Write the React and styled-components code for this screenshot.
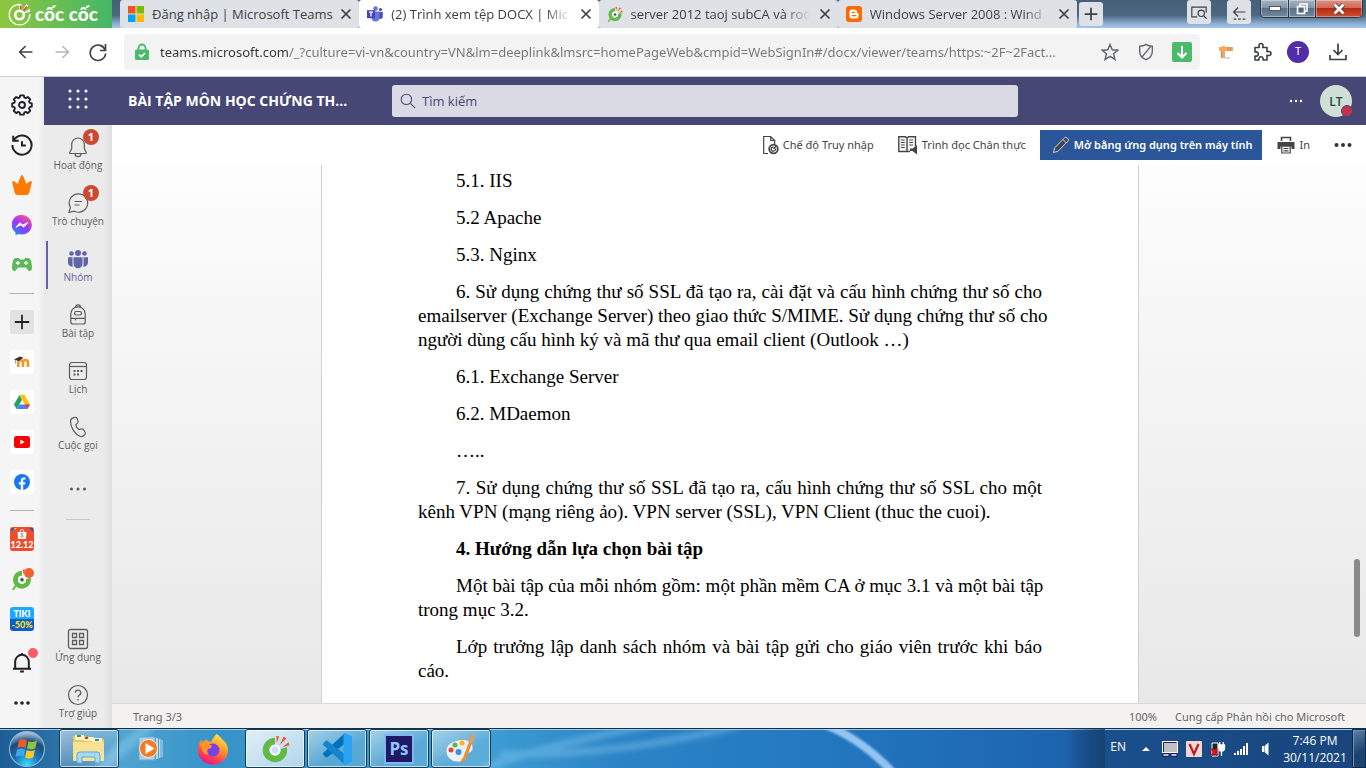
import React from "react";
import styled, { createGlobalStyle, css } from "styled-components";

const UI = `"Open Sans", "Noto Sans", sans-serif`;
const UI_WIDE = `"Noto Sans", "Open Sans", sans-serif`;

const GlobalStyle = createGlobalStyle`
  *, *::before, *::after { box-sizing: border-box; }
  html, body { margin: 0; padding: 0; overflow: hidden; }
  body { font-family: ${UI}; color: #252423; background: #fff; }
  button, input { font: inherit; color: inherit; border: 0; padding: 0; margin: 0; background: none; outline: 0; }
  svg { display: block; flex: none; }
  a { color: inherit; text-decoration: none; }
  p, h1, h2 { margin: 0; }
`;

const Screen = styled.div`
  display: flex;
  flex-direction: column;
  height: 100vh;
`;

/* ---------- Tab strip ---------- */
const TabStrip = styled.header`
  display: flex;
  flex: none;
  height: 28px;
  background: linear-gradient(180deg, #46607a 0%, #4d6781 55%, #8cb0d4 85%, #a5c8ec 100%);
`;
const Brand = styled.button`
  display: flex;
  align-items: center;
  gap: 4px;
  flex: none;
  width: 112px;
  margin-right: 8px;
  padding-left: 8px;
  background: linear-gradient(90deg, #8fc73e, #44b666);
  color: #fff;
  font: 900 19px / 28px Lato, ${UI};
  white-space: nowrap;
`;
const Tabs = styled.nav`
  display: flex;
  flex: 0 1 957px;
  min-width: 0;
`;
const Tab = styled.div`
  display: flex;
  align-items: center;
  gap: 8px;
  flex: 1 1 0;
  min-width: 0;
  padding: 0 6px 0 8px;
  border-radius: 3px;
  background: ${(p) => (p.$active ? "#fff" : "#dee1e6")};
`;
const TabTitle = styled.span`
  flex: 1;
  min-width: 0;
  margin-right: -4px;
  overflow: hidden;
  white-space: nowrap;
  font-size: 13px;
  line-height: 20px;
  color: #3c4043;
  mask-image: ${(p) => (p.$fade ? "linear-gradient(90deg, #000 84%, transparent 98%)" : "none")};
`;
const TabClose = styled.button`
  flex: none;
  width: 14px;
  height: 14px;
`;
const StripButton = styled.button`
  display: grid;
  place-items: center;
  flex: none;
  width: 24px;
  height: 24px;
  border-radius: 3px;
  background: #dee1e6;
  color: #3c4043;
  margin: ${(p) => p.$margin || "0"};
`;
const WindowControls = styled.div`
  display: flex;
  flex: none;
  height: 18px;
  margin: 0 3px 0 9px;
  border: 1px solid #26384a;
  border-top: 0;
  border-radius: 0 0 5px 5px;
  overflow: hidden;
`;
const WindowButton = styled.button`
  display: grid;
  place-items: center;
  width: ${(p) => p.$w}px;
  border-left: ${(p) => (p.$first ? "0" : "1px solid #26384a")};
  box-shadow: inset 0 0 0 1px rgba(255, 255, 255, 0.35);
  background: ${(p) =>
    p.$danger
      ? "linear-gradient(180deg, #d99384 0%, #cf6b55 45%, #b52a12 50%, #cc5132 100%)"
      : "linear-gradient(180deg, #a5b3c2 0%, #8495a8 45%, #5a7089 50%, #74899f 100%)"};
`;

/* ---------- Address bar ---------- */
const Toolbar = styled.div`
  display: flex;
  align-items: center;
  flex: none;
  height: 49px;
  padding: 0 10px 1px 8px;
  border-bottom: 1px solid #c9cdcb;
  background: #fff;
`;
const IconButton = styled.button`
  display: grid;
  place-items: center;
  flex: none;
  width: 36px;
  height: 36px;
  color: ${(p) => p.$color || "#3c4043"};
`;
const Omnibox = styled.div`
  display: flex;
  align-items: center;
  flex: 1;
  min-width: 0;
  height: 36px;
  margin: 0 8px;
  padding-left: 10px;
  border-radius: 4px;
  background: #f3f3f3;
`;
const UrlInput = styled.input`
  flex: 1;
  min-width: 0;
  height: 24px;
  margin-left: 10px;
  font: 13px ${UI_WIDE};
  text-overflow: ellipsis;
  color: transparent;
  background: linear-gradient(90deg, #333 128px, #757575 128px);
  background-clip: text;
`;
const Profile = styled.span`
  display: grid;
  place-items: center;
  width: 22px;
  height: 22px;
  border-radius: 50%;
  background: #512da8;
  color: #fff;
  font: 11px Roboto, sans-serif;
`;
const Spacer = styled.div`
  flex: ${(p) => (p.$w ? `0 0 ${p.$w}px` : "1")};
`;

/* ---------- Browser side bar ---------- */
const Main = styled.div`
  display: flex;
  flex: 1;
  min-height: 0;
`;
const SideBar = styled.nav`
  display: flex;
  flex-direction: column;
  align-items: center;
  flex: none;
  width: 44px;
  padding: 8px 0 5px;
  background: linear-gradient(90deg, #f5f5f5 38px, #ececec);
`;
const SideButton = styled.button`
  position: relative;
  display: grid;
  place-items: center;
  flex: none;
  width: 40px;
  height: 40px;
  color: #202124;
  margin-top: ${(p) => (p.$push ? "auto" : "0")};
`;
const SideRule = styled.hr`
  width: 24px;
  height: 1px;
  margin: 8px 0;
  border: 0;
  flex: none;
  background: #b4b4b4;
`;
const Tile = styled.span`
  display: grid;
  place-items: center;
  align-content: center;
  width: 24px;
  height: 24px;
  border-radius: 3px;
  overflow: hidden;
  background: ${(p) => p.$bg || "#fff"};
  color: ${(p) => p.$color || "#fff"};
  font: 900 ${(p) => p.$size || 9}px / 11px Lato, ${UI};
`;
const TileLine = styled.span`
  color: ${(p) => p.$color || "inherit"};
`;
const Dot = styled.span`
  position: absolute;
  top: ${(p) => p.$top || 5}px;
  right: ${(p) => p.$right || 4}px;
  width: 10px;
  height: 10px;
  border-radius: 50%;
  background: ${(p) => p.$color};
`;

/* ---------- Teams ---------- */
const Teams = styled.div`
  display: flex;
  flex-direction: column;
  flex: 1;
  min-width: 0;
`;
const TeamsBar = styled.div`
  display: flex;
  align-items: center;
  flex: none;
  height: 48px;
  padding-right: 14px;
  background: #464775;
  color: #fff;
`;
const Waffle = styled.button`
  display: grid;
  place-items: center;
  flex: none;
  width: 68px;
  height: 44px;
  margin-bottom: 4px;
`;
const TeamTitle = styled.h1`
  flex: none;
  width: 264px;
  margin-left: 16px;
  font-size: 14px;
  line-height: 20px;
  font-weight: 700;
  white-space: nowrap;
`;
const SearchBox = styled.label`
  display: flex;
  align-items: center;
  gap: 6px;
  flex: 0 1 626px;
  height: 32px;
  padding: 0 8px;
  border-radius: 3px;
  background: #dadae4;
  color: #464775;
`;
const SearchInput = styled.input`
  flex: 1;
  min-width: 0;
  font-size: 13px;
  &::placeholder { color: #464775; opacity: 1; }
`;
const Avatar = styled.button`
  position: relative;
  width: 32px;
  height: 32px;
  margin-left: 4px;
  border-radius: 50%;
  background: #cfe0d6;
  color: #1d4a34;
  font-size: 12px;
  font-weight: 600;
`;
const Presence = styled.span`
  position: absolute;
  right: -1px;
  bottom: 0;
  width: 12px;
  height: 12px;
  border-radius: 50%;
  border: 1px solid #464775;
  background: #c4314b;
`;
const TeamsBody = styled.div`
  display: flex;
  flex: 1;
  min-height: 0;
`;
const Rail = styled.nav`
  display: flex;
  flex-direction: column;
  gap: 8px;
  flex: none;
  width: 68px;
  padding: 4px 0 3px;
  background: linear-gradient(90deg, #ebebeb 60px, #dedede);
`;
const RailItem = styled.button`
  position: relative;
  display: flex;
  flex-direction: column;
  align-items: center;
  justify-content: ${(p) => (p.$iconOnly ? "center" : "flex-start")};
  flex: none;
  height: 48px;
  padding-top: ${(p) => (p.$iconOnly ? 0 : 6)}px;
  margin-top: ${(p) => (p.$push ? "auto" : "0")};
  color: ${(p) => (p.$active ? "#6264a7" : "#5c5c5c")};
  ${(p) =>
    p.$active &&
    css`
      box-shadow: inset 2px 0 0 #ebebeb, inset 4px 0 0 #6264a7;
    `}
`;
const RailLabel = styled.span`
  font-size: 10px;
  line-height: 12px;
  white-space: nowrap;
`;
const RailBadge = styled.span`
  position: absolute;
  top: 0;
  left: 39px;
  width: 16px;
  height: 16px;
  border-radius: 50%;
  background: #cc4a31;
  color: #fff;
  font-size: 11px;
  line-height: 16px;
  font-weight: 700;
  text-align: center;
`;
const RailRule = styled.hr`
  flex: none;
  width: 24px;
  height: 1px;
  margin: -2px auto 0;
  border: 0;
  background: #c8c8c8;
`;

const Viewer = styled.main`
  display: flex;
  flex-direction: column;
  flex: 1;
  min-width: 0;
`;
const CommandBar = styled.div`
  display: flex;
  align-items: center;
  justify-content: flex-end;
  flex: none;
  height: 40px;
  padding-right: 5px;
  background: #fff;
`;
const Command = styled.button`
  display: flex;
  align-items: center;
  gap: 4px;
  height: 30px;
  padding: 0 ${(p) => p.$padX || 12}px;
  font: 11px / 16px ${UI_WIDE};
  white-space: nowrap;
  color: #444;
  ${(p) =>
    p.$primary &&
    css`
      background: #2b579a;
      color: #fff;
      font-weight: 600;
      padding: 0 10px 0 12px;
      margin-left: 2px;
    `}
`;
const DocArea = styled.div`
  display: flex;
  flex: 1;
  min-height: 0;
  overflow: hidden;
  background: linear-gradient(180deg, #fdfdfd 0%, #f3f2f2 50%, #e9e8e8 100%);
`;
const PageWell = styled.div`
  flex: 1;
  min-width: 0;
  overflow: hidden;
`;
const Paper = styled.article`
  width: 818px;
  max-width: 100%;
  min-height: 100%;
  margin: 0 auto;
  padding: 4px 96px;
  border: 1px solid #cfcfd4;
  border-width: 0 1px;
  background: #fff;
  color: #000;
  font: 19px / 24px "Liberation Serif", serif;
`;
const Paragraph = styled.p`
  margin-bottom: 13px;
  font-weight: ${(p) => (p.$bold ? 700 : 400)};
`;
const Line = styled.span`
  display: block;
  text-indent: ${(p) => (p.$first ? "38px" : "0")};
  white-space: nowrap;
  text-align: left;
  text-align-last: ${(p) => (p.$justify ? "justify" : "left")};
`;
const ScrollTrack = styled.div`
  flex: none;
  width: 18px;
  padding: 394px 6px 0;
`;
const ScrollThumb = styled.div`
  height: 78px;
  border-radius: 3px;
  background: #8a8a8a;
`;
const StatusBar = styled.footer`
  display: flex;
  align-items: center;
  gap: 18px;
  flex: none;
  height: 25px;
  padding: 1px 21px 0;
  border-top: 1px solid #d8d8d8;
  background: #f3f2f1;
  color: #666;
  font: 11px / 16px ${UI_WIDE};
`;

/* ---------- Task bar ---------- */
const TaskBar = styled.footer`
  position: relative;
  display: flex;
  align-items: stretch;
  flex: none;
  height: 40px;
  border-top: 1px solid #12304c;
  box-shadow: inset 0 1px 0 #9fc9e8;
  overflow: hidden;
  background: linear-gradient(90deg, #1c5d96 0%, #2a71a6 4%, #4fa3d2 9%, #3793c8 16%, #3f9fd3 35%, #2c84c6 45%, #2276be 62%, #1d63ae 78%, #1a4f8c 81%, #19457c 100%);
`;
const Swoosh = styled.svg`
  position: absolute;
  inset: 0;
  width: 100%;
  height: 100%;
`;
const StartButton = styled.button`
  position: relative;
  display: grid;
  place-items: center;
  flex: none;
  width: 54px;
  margin-right: 5px;
`;
const TaskButton = styled.button`
  position: relative;
  display: grid;
  place-items: center;
  flex: none;
  width: 60px;
  margin-right: 2px;
  border-radius: 3px;
  ${(p) =>
    p.$open &&
    css`
      border: 1px solid #143a5a;
      box-shadow: inset 0 0 0 1px rgba(255, 255, 255, 0.65);
      background: linear-gradient(150deg, rgba(255, 255, 255, 0.55), rgba(255, 255, 255, 0.15) 60%);
    `}
  ${(p) =>
    p.$active &&
    css`
      background: linear-gradient(150deg, rgba(255, 255, 255, 0.85), rgba(255, 255, 255, 0.6));
    `}
`;
const PsTile = styled.span`
  display: grid;
  place-items: center;
  width: 30px;
  height: 30px;
  border: 2px solid #7fb8f0;
  background: #1f1a66;
  color: #8fc6ff;
  font: 700 17px / 20px "Open Sans", sans-serif;
`;
const Tray = styled.div`
  position: relative;
  display: flex;
  align-items: center;
  margin-left: auto;
  color: #fff;
  font-size: 12px;
`;
const TrayButton = styled.button`
  display: grid;
  place-items: center;
  width: 24px;
  height: 24px;
`;
const Lang = styled.button`
  height: 24px;
  margin: 0 8px 4px 0;
  font: 12px ${UI};
`;
const Clock = styled.button`
  width: 74px;
  font-size: 12px;
  line-height: 17px;
  text-align: center;
  white-space: nowrap;
`;
const ShowDesktop = styled.button`
  width: 14px;
  align-self: stretch;
  border: 1px solid #0d2a4a;
  box-shadow: inset 1px 1px 0 #6d90b4;
  background: linear-gradient(150deg, #5f83a8, #1c4471 60%);
`;

/* ---------- Drawings ---------- */
const CrossIcon = () => (
  <svg width="14" height="14" viewBox="0 0 14 14" stroke="#3c4043" strokeWidth="1.7">
    <path d="M2.5 2.5l9 9M11.5 2.5l-9 9" />
  </svg>
);
const CocCocLogo = () => (
  <svg width="23" height="26" viewBox="0 0 23 26" fill="none" stroke="#fff">
    <path d="M12 3.300A10.300 10.300 0 1 0 21.800 13" strokeWidth="1.300" />
    <circle cx="11.500" cy="14" r="4.300" strokeWidth="2.600" />
    <path d="M12 8.500L10.500 3.500l3 .3zM14.500 9.500l4-6 1.800 1.200zM16 12l5.500-4 .3 2.600z" fill="#fff" strokeWidth=".5" />
    <path d="M12.800 8.300l-.5-4M15.200 9.700l3.500-4.200" stroke="#f04d23" strokeWidth="1.500" />
  </svg>
);
const CocIcon = ({ size = 16, stem }) => (
  <svg width={size} height={size} viewBox="0 0 24 24">
    {stem && <path d="M7 17L2.500 23" stroke="#76c043" strokeWidth="2.500" strokeLinecap="round" />}
    <path d="M12 3a9.800 9.800 0 1 0 9.500 7.500l-5.200 1.400a4.400 4.400 0 1 1-4.300-3.500z" fill="#62b946" />
    <circle cx="12" cy="12.800" r="4.200" fill={stem ? "#ccebc2" : "none"} />
    <circle cx="12" cy="12.800" r="3.600" fill="none" stroke="#fff" strokeWidth="1.600" />
    {stem && <circle cx="12" cy="12.800" r="1.800" fill="#555" />}
    <path d="M13.500 7l-.5-5.500 2.300.2zM15.800 8.500l3.200-6.500 2.200 1.500zM17.800 10.500l5-4 .8 2.400z" fill="#ef5430" />
  </svg>
);
const MicrosoftIcon = () => (
  <svg width="16" height="16" viewBox="0 0 16 16">
    <path fill="#f25022" d="M0 0h7.500v7.500H0z" />
    <path fill="#7fba00" d="M8.500 0H16v7.500H8.500z" />
    <path fill="#00a4ef" d="M0 8.500h7.500V16H0z" />
    <path fill="#ffb900" d="M8.500 8.500H16V16H8.500z" />
  </svg>
);
const TeamsIcon = () => (
  <svg width="16" height="16" viewBox="0 0 16 16">
    <circle cx="8.500" cy="2.600" r="2.300" fill="#6c72d8" />
    <circle cx="13.500" cy="3.600" r="1.700" fill="#4a50b8" />
    <path d="M11.500 6h4.300v4.500a2.500 2.500 0 0 1-4.300 1.700z" fill="#4a50b8" />
    <path d="M4.500 5.500h8v6a4 4 0 0 1-8 0z" fill="#6c72d8" />
    <path d="M0 4.200h8v8H0z" fill="#3f46b5" />
    <path d="M2 6.200h4M4 6.200v4.400" stroke="#fff" strokeWidth="1.300" />
  </svg>
);
const BloggerIcon = () => (
  <svg width="16" height="16" viewBox="0 0 16 16">
    <rect width="16" height="16" rx="3" fill="#ff6a00" />
    <path d="M6 3.500h2.500A2.500 2.500 0 0 1 11 6c0 .8.300 1 .9 1.100.5.100.6.300.6.800V10a2.500 2.500 0 0 1-2.500 2.500H6A2.500 2.500 0 0 1 3.500 10V6A2.500 2.500 0 0 1 6 3.500z" fill="#fff" />
    <path d="M6.200 6.300h2.200M6.200 9.700h3.600" stroke="#ff6a00" strokeWidth="1.300" strokeLinecap="round" />
  </svg>
);
const LockIcon = () => (
  <svg width="16" height="18" viewBox="0 0 16 18">
    <path d="M4.500 8V5a3.500 3.500 0 0 1 7 0v3" fill="none" stroke="#4cba6b" strokeWidth="1.800" />
    <rect x="1" y="6.500" width="14" height="10.500" rx="1.500" fill="#4cba6b" />
    <path d="M5 11.500l2.200 2.300L11 10" fill="none" stroke="#fff" strokeWidth="1.700" />
  </svg>
);
const Stroke = ({ size = 20, w = 1.6, children, ...rest }) => (
  <svg width={size} height={size} viewBox="0 0 20 20" fill="none" stroke="currentColor" strokeWidth={w} {...rest}>
    {children}
  </svg>
);
const Dots = ({ r = 1.3, gap = 5, color = "currentColor" }) => (
  <svg width="20" height="20" viewBox="0 0 20 20" fill={color}>
    <circle cx={10 - gap} cy="10" r={r} />
    <circle cx="10" cy="10" r={r} />
    <circle cx={10 + gap} cy="10" r={r} />
  </svg>
);
const GearIcon = () => (
  <Stroke size={22} w={1.700} strokeLinejoin="round">
    <path d="M8.400 1.200h3.200l.5 2 1.300.6 1.900-1.100 2.200 2.200-1.100 1.900.6 1.300 1.900.4v3l-1.900.5-.6 1.300 1.100 1.900-2.200 2.200-1.900-1.100-1.300.6-.5 1.900H8.400l-.5-1.900-1.300-.6-1.900 1.100-2.200-2.200 1.100-1.900L3 12l-1.900-.5v-3L3 8.100l.6-1.300-1.100-1.900 2.200-2.200 1.900 1.100 1.300-.6z" />
    <circle cx="10" cy="10" r="2.700" />
  </Stroke>
);
const HistoryIcon = () => (
  <Stroke size={22} w={1.800}>
    <path d="M2.600 5.500A8.700 8.700 0 1 1 1.300 10" />
    <path d="M2 1.500v4.700h5M10 6.500v4h3.500" />
  </Stroke>
);
const CrownIcon = () => (
  <svg width="20" height="20" viewBox="0 0 20 20" fill="#ff7a00">
    <path d="M0 6.500c1.800-.8 3.400 0 5.500 2.500L9 .8c.4-1 1.600-1 2 0L14.500 9c2.100-2.500 3.700-3.300 5.500-2.500L17.500 17q-.5 3-3 3h-9q-2.500 0-3-3z" />
  </svg>
);
const MessengerIcon = () => (
  <svg width="20" height="20" viewBox="0 0 20 20">
    <defs>
      <linearGradient id="msg" x1="0.200" y1="1" x2="0.800" y2="0">
        <stop offset="0" stopColor="#1a8cff" />
        <stop offset="0.500" stopColor="#a033ff" />
        <stop offset="1" stopColor="#ff5f7a" />
      </linearGradient>
    </defs>
    <path d="M10 0a10 9.700 0 1 1-3 19L3.500 20v-2.800A9.600 9.600 0 0 1 10 0z" fill="url(#msg)" />
    <path d="M4 12.300l3.800-4.600 3 2.300 5-2.500-4 4.700-3-2.300z" fill="#fff" stroke="#fff" strokeWidth=".8" />
  </svg>
);
const GamepadIcon = () => (
  <svg width="22" height="16" viewBox="0 0 22 16">
    <path d="M5 1h3l1 1.500h4L14 1h3c3 0 3.700 5 4 9 .2 4-2.500 5.500-4.500 2.500L15 10.500H7L5.500 12.500C3.500 15.500.8 14 1 10c.300-4 1-9 4-9z" fill="#5cb85c" />
    <path d="M6.800 4v4M4.800 6h4" stroke="#fff" strokeWidth="1.300" />
    <path d="M15 4v4M13 6h4" stroke="#fff" strokeWidth="1.400" strokeDasharray="1.400 1.200" />
  </svg>
);
const PlusIcon = ({ size = 16 }) => (
  <Stroke size={size} w={2.200}>
    <path d="M10 1v18M1 10h18" />
  </Stroke>
);
const MoodleIcon = () => (
  <svg width="16" height="12" viewBox="0 0 16 12" fill="none">
    <path d="M4.300 11V6.500a2.200 2.200 0 0 1 4.700 0V11M9 11V6.500a2.400 2.400 0 0 1 5 0V11" stroke="#f7931e" strokeWidth="2.500" />
    <path d="M0 3.500L6 .5l3.500 1.200L4.500 5z" fill="#333" />
    <path d="M1.500 4v3.500" stroke="#777" strokeWidth=".7" />
  </svg>
);
const DriveIcon = () => (
  <svg width="16" height="14" viewBox="0 0 16 14">
    <path d="M5.400 0L0 9.400 2.600 14 8 4.700z" fill="#1ea362" />
    <path d="M5.400 0h5.200L16 9.400h-5.300z" fill="#ffc107" />
    <path d="M5.300 9.400H16L13.400 14H2.600z" fill="#4285f4" />
    <path d="M10.700 9.400H16L13.400 14z" fill="#ea4335" />
  </svg>
);
const YoutubeIcon = () => (
  <svg width="16" height="12" viewBox="0 0 16 12">
    <rect width="16" height="12" rx="2.500" fill="#f00" />
    <path d="M6.300 3.400v5.200L10.700 6z" fill="#fff" />
  </svg>
);
const FacebookIcon = () => (
  <svg width="16" height="16" viewBox="0 0 16 16">
    <circle cx="8" cy="8" r="8" fill="#1877f2" />
    <path d="M6.800 16v-5.500h-2V8.200h2V6.500c0-2 1.200-3.100 3-3.100.9 0 1.700.1 1.700.1v2h-1c-1 0-1.300.6-1.300 1.200v1.500h2.200l-.4 2.300H9.200V16z" fill="#fff" />
  </svg>
);
const BagIcon = () => (
  <svg width="22" height="11" viewBox="0 0 22 11">
    <path d="M0 0h5L1 3zM18 0h4v4z" fill="#1f5fc4" />
    <path d="M3 0h3L3.500 2z" fill="#f8c42c" />
    <path d="M6.500 4h9l-.5 7H7z" fill="#fff" />
    <path d="M9 4a2 2.500 0 0 1 4 0" fill="none" stroke="#fff" />
    <path d="M12.300 5.700c-2.500-.9-3.200.9-1.300 1.500s1.500 2.300-1.400 1.500" fill="none" stroke="#ee4d2d" strokeWidth=".9" />
  </svg>
);
const BellIcon = ({ size = 22, w = 1.8 }) => (
  <Stroke size={size} w={w}>
    <path d="M1.800 15.300h16.400M3.800 15V8.800a6.200 6.200 0 0 1 12.400 0V15M8.300 17.800h3.400M10 1v2" />
  </Stroke>
);
const RailIcon = ({ children, fill }) => (
  <svg width="24" height="24" viewBox="0 0 24 24" fill={fill || "none"} stroke={fill ? "none" : "currentColor"} strokeWidth="1.200">
    {children}
  </svg>
);

const railItems = [
  {
    label: "Hoạt động",
    badge: 1,
    icon: (
      <RailIcon>
        <path d="M12 3a6.300 6.300 0 0 0-6.300 6.300v4.200L3.800 17.500c-.3.700 0 1 .7 1h15c.7 0 1-.300.7-1l-1.900-4V9.300A6.300 6.300 0 0 0 12 3zM9 18.700a3 3 0 0 0 6 0" />
      </RailIcon>
    ),
  },
  {
    label: "Trò chuyện",
    badge: 1,
    icon: (
      <RailIcon>
        <path d="M12.500 2.800a9.200 9.200 0 1 1-4.200 17.400L3 21.500l1.400-5A9.200 9.200 0 0 1 12.500 2.800zM8.500 10.500h7.500M8.500 14h5" />
      </RailIcon>
    ),
  },
  {
    label: "Nhóm",
    active: true,
    icon: (
      <RailIcon fill="#6264a7">
        <circle cx="12" cy="6" r="3" />
        <circle cx="5.500" cy="6.500" r="2.300" />
        <circle cx="18.500" cy="6.500" r="2.300" />
        <path d="M7.500 10.300h9v6.500a4.500 4.500 0 0 1-9 0zM2 10.300h4.500v7.500q0 1 .4 2C4 19.800 2 18 2 15.500zM22 10.300h-4.500v7.500q0 1-.4 2c2.900 0 4.900-1.800 4.900-4.300z" />
      </RailIcon>
    ),
  },
  {
    label: "Bài tập",
    icon: (
      <RailIcon>
        <path d="M4.800 11a7.200 7.200 0 0 1 14.400 0v8q0 2-2 2H6.800q-2 0-2-2zM9.500 4.300a2.500 2.500 0 0 1 5 0M4.800 15.300h14.400M9.500 15.300v2" />
        <rect x="8.500" y="8.500" width="7" height="3.500" rx="1.700" />
      </RailIcon>
    ),
  },
  {
    label: "Lịch",
    icon: (
      <RailIcon>
        <rect x="3.500" y="3.500" width="17" height="17" rx="2.500" />
        <path d="M3.500 7.500h17" />
        <path d="M7.500 12h2M11 12h2M14.500 12h2M7.500 15.500h2M11 15.500h2" strokeWidth="2" />
      </RailIcon>
    ),
  },
  {
    label: "Cuộc gọi",
    icon: (
      <RailIcon>
        <path d="M7.200 2.800L9 2.300c1-.200 1.700.2 2 1l1 2.600c.3.900.1 1.600-.5 2.200L9.700 9.700c.3 1.700 1.700 4 3.400 5l2.300-.7c.8-.2 1.500 0 2 .7l1.600 2.300c.6.8.5 1.600-.1 2.300l-1.200 1.200c-1 1-2.400 1.300-3.700.8C8.700 19.200 4.800 12.500 4.500 6.500c0-1.900 1.200-3.300 2.700-3.700z" />
      </RailIcon>
    ),
  },
];

const tabs = [
  { title: "Đăng nhập | Microsoft Teams", icon: <MicrosoftIcon /> },
  { title: "(2) Trình xem tệp DOCX | Mic", icon: <TeamsIcon />, active: true, fade: true },
  { title: "server 2012 taoj subCA và roo", icon: <CocIcon stem />, fade: true },
  { title: "Windows Server 2008 : Wind", icon: <BloggerIcon />, fade: true },
];

const documentText = [
  { lines: ["5.1. IIS"] },
  { lines: ["5.2 Apache"] },
  { lines: ["5.3. Nginx"] },
  {
    lines: [
      "6. Sử dụng chứng thư số SSL đã tạo ra, cài đặt và cấu hình chứng thư số cho",
      "emailserver (Exchange Server) theo giao thức S/MIME. Sử dụng chứng thư số cho",
      "người dùng cấu hình ký và mã thư qua email client (Outlook …)",
    ],
  },
  { lines: ["6.1. Exchange Server"] },
  { lines: ["6.2. MDaemon"] },
  { lines: ["….."] },
  {
    lines: [
      "7. Sử dụng chứng thư số SSL đã tạo ra, cấu hình chứng thư số SSL cho một",
      "kênh VPN (mạng riêng ảo). VPN server (SSL), VPN Client (thuc the cuoi).",
    ],
  },
  { bold: true, lines: ["4. Hướng dẫn lựa chọn bài tập"] },
  {
    lines: [
      "Một bài tập của mỗi nhóm gồm: một phần mềm CA ở mục 3.1 và một bài tập",
      "trong mục 3.2.",
    ],
  },
  {
    lines: [
      "Lớp trưởng lập danh sách nhóm và bài tập gửi cho giáo viên trước khi báo",
      "cáo.",
    ],
  },
];

function BrowserTop() {
  return (
    <>
      <TabStrip>
        <Brand><CocCocLogo />cốc cốc</Brand>
        <Tabs>
          {tabs.map((t) => (
            <Tab key={t.title} $active={t.active}>
              {t.icon}
              <TabTitle $fade={t.fade}>{t.title}</TabTitle>
              <TabClose aria-label="Đóng"><CrossIcon /></TabClose>
            </Tab>
          ))}
        </Tabs>
        <StripButton $margin="2px 0 0 2px" aria-label="Thẻ mới">
          <Stroke size={14} w={2.500}><path d="M10 1v18M1 10h18" /></Stroke>
        </StripButton>
        <Spacer />
        <StripButton aria-label="Tìm thẻ">
          <Stroke size={18} w={1.300}>
            <path d="M8 15.500H2V4.500h16v6" />
            <circle cx="12.500" cy="11.500" r="3.500" />
            <path d="M15 14l3.500 3.500" />
          </Stroke>
        </StripButton>
        <StripButton $margin="0 0 0 16px" aria-label="Khôi phục">
          <Stroke size={18} w={1.300}>
            <path d="M17 10H4M9 5l-5 5 5 5" />
            <path d="M4 18h14" strokeDasharray="3 2" />
          </Stroke>
        </StripButton>
        <WindowControls>
          <WindowButton $w={27} $first aria-label="Thu nhỏ">
            <svg width="12" height="5"><rect x=".5" y=".5" width="11" height="4" fill="#fff" stroke="#4a5a6c" /></svg>
          </WindowButton>
          <WindowButton $w={27} aria-label="Khôi phục cửa sổ">
            <svg width="12" height="12" fill="none" stroke="#fff" strokeWidth="1.600">
              <path d="M4 3V1h7v7H9" />
              <rect x="1.500" y="3.500" width="7" height="7" />
              <rect x="4" y="6" width="2" height="2" stroke="#4a5a6c" strokeWidth="1" />
            </svg>
          </WindowButton>
          <WindowButton $w={47} $danger aria-label="Đóng cửa sổ">
            <svg width="14" height="12" viewBox="0 0 14 12">
              <path d="M2.500 1.500l9 9M11.500 1.500l-9 9" stroke="#5b3a3a" strokeWidth="4.400" />
              <path d="M2.500 1.500l9 9M11.500 1.500l-9 9" stroke="#fff" strokeWidth="2.800" />
            </svg>
          </WindowButton>
        </WindowControls>
      </TabStrip>
      <Toolbar>
        <IconButton aria-label="Quay lại">
          <Stroke size={16} w={1.900}><path d="M18 10H2.500M9.500 2.500L2 10l7.500 7.500" /></Stroke>
        </IconButton>
        <IconButton $color="#b5b5b5" aria-label="Tiến">
          <Stroke size={16} w={1.900}><path d="M2 10h15.500M10.500 2.500L18 10l-7.500 7.500" /></Stroke>
        </IconButton>
        <IconButton aria-label="Tải lại">
          <Stroke size={20} w={1.700}>
            <path d="M17.300 8.500A7.700 7.700 0 1 0 17.600 11.500" />
            <path d="M17.500 2v6.500H12" />
          </Stroke>
        </IconButton>
        <Omnibox>
          <LockIcon />
          <UrlInput
            aria-label="Địa chỉ"
            defaultValue="teams.microsoft.com/_?culture=vi-vn&country=VN&lm=deeplink&lmsrc=homePageWeb&cmpid=WebSignIn#/docx/viewer/teams/https:~2F~2Fact..."
          />
          <IconButton $color="#5f6368" aria-label="Đánh dấu">
            <Stroke size={18} w={1.600}><path d="M10 1.800l2.500 5.700 6.200.5-4.700 4 1.500 6.200-5.500-3.300-5.500 3.300L6 12 1.300 8l6.200-.5z" /></Stroke>
          </IconButton>
          <IconButton $color="#5f6368" aria-label="Chặn quảng cáo">
            <Stroke size={18} w={1.500}><path d="M10 1.500c2 1.500 4.500 2 7 2v6c0 4.500-3 7.500-7 9-4-1.500-7-4.500-7-9v-6c2.500 0 5-.5 7-2zM5.500 15.500l10-12" /></Stroke>
          </IconButton>
          <IconButton aria-label="Tải xuống video">
            <svg width="20" height="20" viewBox="0 0 20 20">
              <rect width="20" height="20" rx="2" fill="#4cba6b" />
              <path d="M10 4v11.500M5.500 11l4.500 4.500 4.500-4.500" fill="none" stroke="#fff" strokeWidth="2" />
            </svg>
          </IconButton>
        </Omnibox>
        <IconButton aria-label="Tiện ích đã ghim">
          <svg width="16" height="16" viewBox="0 0 16 16">
            <path d="M1 3h3V2h3v1h8v4H7v7H3V7H1z" fill="#f0a862" />
            <path d="M3.500 7v7M10 3v4M12.500 3v4" stroke="#c77a35" strokeWidth=".8" />
            <path d="M7 14h5" stroke="#ccc" strokeWidth="1.500" />
          </svg>
        </IconButton>
        <IconButton aria-label="Tiện ích">
          <Stroke size={20} w={1.600} strokeLinejoin="round">
            <path d="M3 5.500h4.300c-1-2.700.200-4 1.700-4s2.700 1.300 1.700 4H15v4.300c2.700-1 4 .2 4 1.700s-1.300 2.700-4 1.700V18h-4c.5-2-.5-3.300-2-3.300S6.500 16 7 18H3v-4c2 .5 3.300-.5 3.300-2S5 9.500 3 10z" />
          </Stroke>
        </IconButton>
        <IconButton aria-label="Hồ sơ"><Profile>T</Profile></IconButton>
        <Spacer $w={4} />
        <IconButton aria-label="Tải xuống">
          <Stroke size={20} w={1.700}><path d="M10 1.500V12M5.500 8l4.500 4.500L14.500 8M2 13v4.500h16V13" /></Stroke>
        </IconButton>
      </Toolbar>
    </>
  );
}

function BrowserSide() {
  return (
    <SideBar aria-label="Thanh bên">
      <SideButton aria-label="Cài đặt"><GearIcon /></SideButton>
      <SideButton aria-label="Lịch sử"><HistoryIcon /></SideButton>
      <SideButton aria-label="Phần thưởng"><CrownIcon /></SideButton>
      <SideButton aria-label="Messenger"><MessengerIcon /></SideButton>
      <SideButton aria-label="Trò chơi"><GamepadIcon /></SideButton>
      <SideRule />
      <SideButton aria-label="Thêm"><Tile $bg="#e2e2e2" $color="#202124"><PlusIcon /></Tile></SideButton>
      <SideButton aria-label="Moodle"><Tile><MoodleIcon /></Tile></SideButton>
      <SideButton aria-label="Drive"><Tile><DriveIcon /></Tile></SideButton>
      <SideButton aria-label="YouTube"><Tile><YoutubeIcon /></Tile></SideButton>
      <SideButton aria-label="Facebook"><Tile><FacebookIcon /></Tile></SideButton>
      <SideRule />
      <SideButton><Tile $bg="#ee4d2d"><BagIcon /><TileLine>12.12</TileLine></Tile></SideButton>
      <SideButton aria-label="Cốc Cốc"><CocIcon size={22} stem /><Dot $color="#f26236" $top={9} $right={8} /></SideButton>
      <SideButton>
        <Tile $bg="linear-gradient(#1ba8ff 50%, #0d5cd6 50%)"><TileLine>TIKI</TileLine><TileLine $color="#ffe600">-50%</TileLine></Tile>
      </SideButton>
      <SideButton $push aria-label="Thông báo"><BellIcon /><Dot $color="#ff5a65" $right={4} /></SideButton>
      <SideButton aria-label="Thêm nữa"><Dots r={1.800} gap={6} /></SideButton>
    </SideBar>
  );
}

function Document() {
  return (
    <DocArea>
      <PageWell>
        <Paper>
          {documentText.map((p) => (
            <Paragraph key={p.lines[0]} $bold={p.bold}>
              {p.lines.map((line, i) => (
                <Line key={line} $first={i === 0} $justify={i < p.lines.length - 1}>{line}</Line>
              ))}
            </Paragraph>
          ))}
        </Paper>
      </PageWell>
      <ScrollTrack><ScrollThumb /></ScrollTrack>
    </DocArea>
  );
}

function TeamsApp() {
  return (
    <Teams>
      <TeamsBar>
        <Waffle aria-label="Ứng dụng Microsoft">
          <svg width="20" height="20" viewBox="0 0 20 20" fill="#fff">
            {[2, 10, 18].map((y) => [2, 10, 18].map((x) => <circle key={`${x}-${y}`} cx={x} cy={y} r="1.500" />))}
          </svg>
        </Waffle>
        <TeamTitle>BÀI TẬP MÔN HỌC CHỨNG TH...</TeamTitle>
        <SearchBox>
          <Stroke size={16} w={1.300}><circle cx="8" cy="8" r="6.500" /><path d="M13 13l6 6" /></Stroke>
          <SearchInput type="search" placeholder="Tìm kiếm" aria-label="Tìm kiếm" />
        </SearchBox>
        <Spacer />
        <IconButton $color="#fff" aria-label="Tùy chọn"><Dots r={1.200} /></IconButton>
        <Spacer $w={2} />
        <Avatar>LT<Presence /></Avatar>
      </TeamsBar>
      <TeamsBody>
        <Rail aria-label="Teams">
          {railItems.map((item) => (
            <RailItem key={item.label} $active={item.active}>
              {item.icon}
              <RailLabel>{item.label}</RailLabel>
              {item.badge && <RailBadge>{item.badge}</RailBadge>}
            </RailItem>
          ))}
          <RailItem $iconOnly aria-label="Thêm ứng dụng"><Dots r={1.500} gap={6.500} /></RailItem>
          <RailRule />
          <RailItem $push>
            <RailIcon>
              <rect x="2.500" y="2.500" width="19" height="19" rx="2" strokeWidth="1.300" />
              <path d="M6.500 6.500h4v4h-4zM13.500 6.500h4v4h-4zM6.500 13.500h4v4h-4zM13.500 13.500h4v4h-4z" strokeWidth="1.300" />
            </RailIcon>
            <RailLabel>Ứng dụng</RailLabel>
          </RailItem>
          <RailItem>
            <RailIcon>
              <circle cx="12" cy="12" r="9.500" />
              <path d="M9.300 9.800a2.700 2.700 0 1 1 3.900 2.400q-1.200.7-1.200 2.100M12 16v1.500" strokeWidth="1.300" />
            </RailIcon>
            <RailLabel>Trợ giúp</RailLabel>
          </RailItem>
        </Rail>
        <Viewer>
          <CommandBar>
            <Command>
              <svg width="16" height="20" viewBox="0 0 16 20" fill="none" stroke="#444">
                <path d="M5 18.500H.7V1.500h7l4 4V9M7.700 1.500v4h4" strokeWidth="1.200" />
                <circle cx="10.500" cy="14" r="4.300" strokeWidth="1.800" />
                <path d="M12.500 13.500a2.200 2.200 0 1 1-2-1.700M10.500 14l2.500-3" strokeWidth="1.300" />
              </svg>
              Chế độ Truy nhập
            </Command>
            <Command>
              <svg width="20" height="20" viewBox="0 0 20 20" fill="none" stroke="#444" strokeWidth="1.400">
                <path d="M12 16.500H.8V1.800h6.700L9 3.300l1.500-1.500H17.500V11M9 3.300v13" />
                <path d="M2.800 5h4M2.800 7.500h4M2.800 10h4M2.800 12.500h4M11.200 5h4M11.200 7.500h4M11.200 10h4" strokeWidth="1.100" />
                <path d="M12 13.500h2.500L19 10v9.500L14.500 16H12z" fill="#444" stroke="none" />
              </svg>
              Trình đọc Chân thực
            </Command>
            <Command $primary>
              <svg width="18" height="18" viewBox="0 0 18 18" fill="#444" stroke="#dbe3ef" strokeWidth=".9">
                <path d="M1.500 16.500l1.200-4.700L12.800 1.700q1-.8 2 0l1.300 1.300q.9 1 0 2L6 15.200z" />
                <path d="M11 3.500L14.300 7" />
              </svg>
              Mở bằng ứng dụng trên máy tính
            </Command>
            <Command $padX={15}>
              <svg width="18" height="18" viewBox="0 0 18 18" fill="none" stroke="#444" strokeWidth="1.600">
                <path d="M4.500 5V1.500h9V5" />
                <path d="M.5 6h17v7h-3v-2.500h-11V13h-3z" fill="#444" stroke="none" />
                <path d="M4.800 10v7h8.400v-7zM6.500 12.500h5M6.500 14.800h5" strokeWidth="1.200" />
              </svg>
              In
            </Command>
            <IconButton aria-label="Lệnh khác"><Dots r={2} gap={6.500} color="#333" /></IconButton>
          </CommandBar>
          <Document />
          <StatusBar>
            <span>Trang 3/3</span>
            <Spacer />
            <span>100%</span>
            <a href="#feedback">Cung cấp Phản hồi cho Microsoft</a>
          </StatusBar>
        </Viewer>
      </TeamsBody>
    </Teams>
  );
}

function WindowsBar() {
  return (
    <TaskBar>
      <Swoosh viewBox="0 0 1366 40" preserveAspectRatio="none" fill="none" aria-hidden="true">
        <defs>
          <linearGradient id="trayShade">
            <stop offset="0" stopColor="#14406f" stopOpacity="0" />
            <stop offset="1" stopColor="#14406f" stopOpacity=".8" />
          </linearGradient>
          <filter id="glow" x="-10%" y="-50%" width="120%" height="200%"><feGaussianBlur stdDeviation="3" /></filter>
          <filter id="softEdge" x="-20%" y="-20%" width="140%" height="140%"><feGaussianBlur stdDeviation="1.200" /></filter>
        </defs>
        <path d="M826 -4Q864 12 894 46" stroke="#a8d2fa" strokeOpacity=".85" strokeWidth="8" filter="url(#softEdge)" />
        <path d="M485 40Q540 18 650 -4M500 26Q620 28 740 -4" stroke="#8fd0f5" strokeOpacity=".35" strokeWidth="8" filter="url(#glow)" />
        <path d="M100 40L150 -4" stroke="#9fdcf5" strokeOpacity=".35" strokeWidth="12" filter="url(#glow)" />
        <rect x="1065" y="0" width="40" height="40" fill="url(#trayShade)" />
      </Swoosh>
      <StartButton aria-label="Bắt đầu">
        <svg width="38" height="38" viewBox="0 0 38 38">
          <defs>
            <radialGradient id="orb" cx=".5" cy=".95" r=".9">
              <stop offset="0" stopColor="#37e0ff" />
              <stop offset=".4" stopColor="#1b74b8" />
              <stop offset=".75" stopColor="#1d4a78" />
              <stop offset="1" stopColor="#9dbdd6" />
            </radialGradient>
          </defs>
          <circle cx="19" cy="19" r="17.500" fill="url(#orb)" stroke="#8db4d0" strokeWidth="1.200" />
          <path d="M11 10.500q4-2.500 8 0l-1.500 7.500q-4-2.200-8.200 0z" fill="#ee5b2b" />
          <path d="M20.500 11q4 2 8.500-.5l-1.700 7.800q-4.300 2.200-8.300 0z" fill="#8cc63e" />
          <path d="M9 19.500q4-2.200 8.200 0l-1.700 7.500q-4-2.200-8 0z" fill="#3fa5ea" />
          <path d="M18.700 20q4 2.200 8.300 0l-1.700 7.500q-4 2.200-8.200 0z" fill="#fdc825" />
        </svg>
      </StartButton>
      <TaskButton $open aria-label="Explorer">
        <svg width="34" height="32" viewBox="0 0 34 32">
          <path d="M1 3h12l2 3h17v21H1z" fill="#e8c768" />
          <path d="M3 2h9v5H3z" fill="#fff3c0" />
          <path d="M12 4h10v4H12zM20 5h10v4H20z" fill="#fdf0b8" />
          <path d="M5 2h4v2H5z" fill="#2faa3c" />
          <path d="M13 4h3v2h-3z" fill="#d23b2b" />
          <path d="M23 6h4v2h-4z" fill="#2b8be0" />
          <path d="M1 9h31v18q0 1-1 1H2q-1 0-1-1z" fill="#f8e296" />
          <path d="M5 30v-8q0-3 3-3h17q3 0 3 3v8h-5v-6H10v6z" fill="#a6d9f2" stroke="#5fa9cf" />
        </svg>
      </TaskButton>
      <TaskButton aria-label="Media Player">
        <svg width="28" height="26" viewBox="0 0 28 26">
          <path d="M2 1h16v23H2z" fill="#a9d2ea" stroke="#6fa8cb" />
          <path d="M19 2h2v21h-2zM22 3h1.500v19H22zM24.500 4h1v17h-1z" fill="#b8dcf0" />
          <circle cx="11.500" cy="12.500" r="9" fill="#f47b20" stroke="#fff" strokeWidth=".7" />
          <path d="M8.500 7v11l9-5.500z" fill="#fff" />
        </svg>
      </TaskButton>
      <TaskButton aria-label="Firefox">
        <svg width="32" height="32" viewBox="0 0 32 32">
          <defs>
            <linearGradient id="fox" x1=".8" y1="0" x2=".3" y2="1">
              <stop offset="0" stopColor="#fff14a" />
              <stop offset=".4" stopColor="#ff9a2a" />
              <stop offset=".75" stopColor="#ff3d55" />
              <stop offset="1" stopColor="#e31587" />
            </linearGradient>
          </defs>
          <path d="M19.500 1c5 3 5.500 6 8 7.500 2 2 3.500 5 3.500 8.500a15 14.500 0 0 1-30 .5C1 13 2 9.500 4.500 6.500L5.500 9l4-2.500C10.500 8 12 8.500 14 9c1.500-3 3-5.500 5.500-8z" fill="url(#fox)" />
          <circle cx="16" cy="17" r="6.500" fill="#7542e5" />
          <path d="M3 11q5-3 8 .5l4 1q0 2.500-4 3.500-2 3 1 5.500-6 0-7-5z" fill="#ff9327" />
        </svg>
      </TaskButton>
      <TaskButton $open $active aria-label="Cốc Cốc"><CocIcon size={30} /></TaskButton>
      <TaskButton $open aria-label="Visual Studio Code">
        <svg width="32" height="32" viewBox="0 0 32 32">
          <path d="M2.500 19.800q-1.500 1 0 2.300L4.500 24q1 .8 2.200 0L24 10.500V0z" fill="#0070ba" />
          <path d="M2.500 12.200q-1.500-1 0-2.300L4.500 8q1-.8 2.200 0L24 21.500V32z" fill="#1384d2" />
          <path d="M24 0l7 3.300v25.400L24 32 22.500 31V1z" fill="#2aa4f2" />
        </svg>
      </TaskButton>
      <TaskButton $open><PsTile>Ps</PsTile></TaskButton>
      <TaskButton $open aria-label="Paint">
        <svg width="32" height="32" viewBox="0 0 32 32">
          <path d="M13 7c8-2 15 1 15 8 0 5-5 4-6 7s-2 7-9 7C6 29 1 24 1 18S6 8.500 13 7z" fill="#e9f1f8" stroke="#8aa5bd" strokeWidth=".8" />
          <circle cx="6" cy="17" r="2.500" fill="#e2462f" />
          <circle cx="10" cy="12" r="2.500" fill="#58b947" />
          <circle cx="17" cy="10" r="2.500" fill="#f6b420" />
          <circle cx="13.500" cy="19" r="3" fill="#3b8fd6" />
          <path d="M16 30q0-4 2-5l6-16 3 1-6 16q-2 3-5 4z" fill="#ef8b2c" />
          <path d="M23.500 9q-1-4 1-6.500 3-2 5.500-1-1 2 .2 3.500-1 4-3.500 5z" fill="#c9a27c" />
        </svg>
      </TaskButton>
      <Tray>
        <Lang>EN</Lang>
        <TrayButton aria-label="Hiện biểu tượng ẩn">
          <svg width="8" height="4" viewBox="0 0 8 4"><path d="M4 0l4 4H0z" fill="#fff" /></svg>
        </TrayButton>
        <TrayButton aria-label="Bàn di chuột">
          <svg width="16" height="16" viewBox="0 0 16 16">
            <rect x=".5" y=".5" width="15" height="11" fill="#c0c0c0" stroke="#fff" />
            <path d="M1 12.500h6v3H1zM9 12.500h6v3H9z" fill="#c0c0c0" stroke="#1a1a70" />
            <path d="M1.500 11V1.500h13" fill="none" stroke="#1a1a90" />
          </svg>
        </TrayButton>
        <TrayButton aria-label="Bộ gõ tiếng Việt">
          <svg width="16" height="16" viewBox="0 0 16 16">
            <rect width="16" height="16" rx="1" fill="#f3d6d2" />
            <path d="M3.500 3L8 13l4.500-10" fill="none" stroke="#b31f1f" strokeWidth="2.200" />
          </svg>
        </TrayButton>
        <TrayButton aria-label="Pin">
          <svg width="16" height="16" viewBox="0 0 16 16">
            <path d="M2 2h6v13H2z" fill="#222" stroke="#fff" />
            <path d="M8.500 4h6v3a3 3 0 0 1-6 0zM9.700 4V1M13.200 4V1M11.500 10v5" fill="#fff" stroke="#fff" strokeWidth="1.300" />
            <path d="M1.500 7.500l6 7M7.500 7.500l-6 7" stroke="#e81010" strokeWidth="2.300" />
          </svg>
        </TrayButton>
        <TrayButton aria-label="Mạng">
          <svg width="16" height="12" viewBox="0 0 16 12" fill="#fff">
            <path d="M0 10h2v2H0zM3 8h2v4H3zM6 6h2v6H6zM9 3h2v9H9zM12 0h2v12h-2z" />
          </svg>
        </TrayButton>
        <TrayButton aria-label="Âm lượng">
          <svg width="12" height="14" viewBox="0 0 12 14" fill="#fff"><path d="M2 4h2v6H2zM4.500 4L8.500.5v13L4.500 10z" /></svg>
        </TrayButton>
        <Clock>7:46 PM<br />30/11/2021</Clock>
        <ShowDesktop aria-label="Hiện màn hình nền" />
      </Tray>
    </TaskBar>
  );
}

export default function App() {
  return (
    <Screen>
      <GlobalStyle />
      <BrowserTop />
      <Main>
        <BrowserSide />
        <TeamsApp />
      </Main>
      <WindowsBar />
    </Screen>
  );
}
